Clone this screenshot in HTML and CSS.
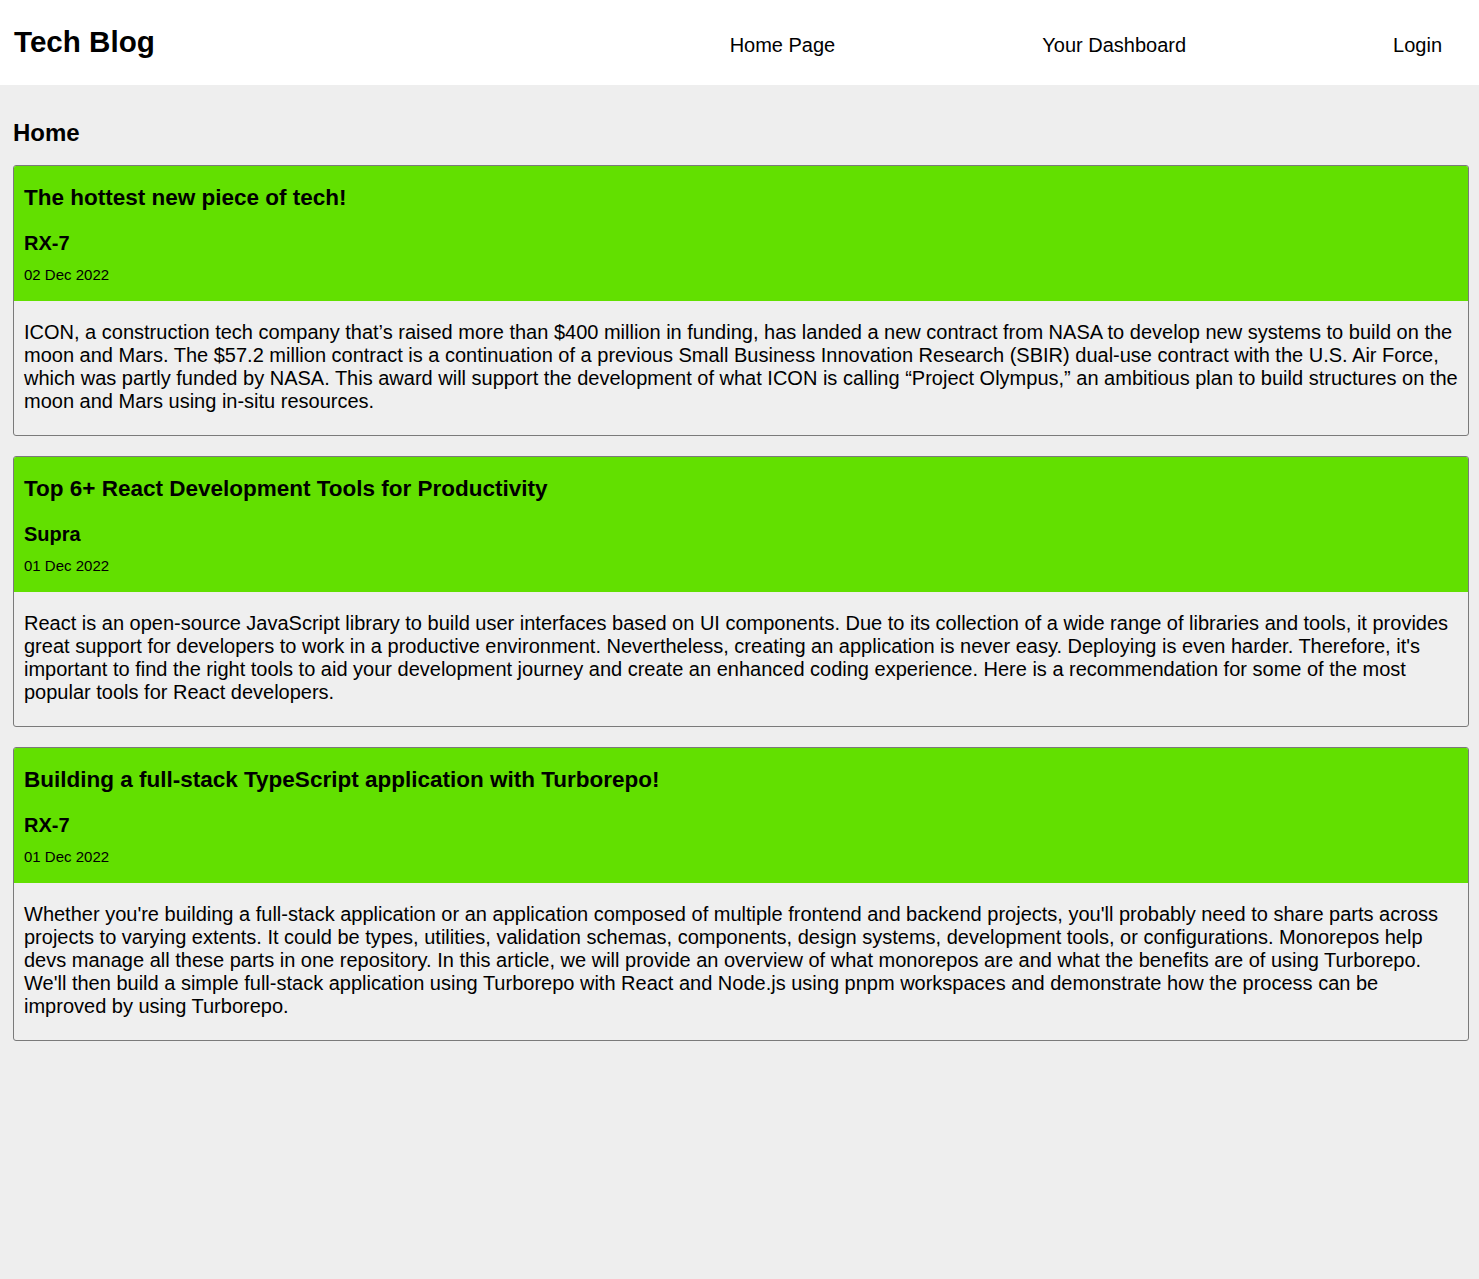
FILE: index.html
```html
<!DOCTYPE html>
<html lang="en">
<head>
<meta charset="utf-8">
<title>Tech Blog</title>
<link rel="stylesheet" href="styles.css">
</head>
<body>
<header class="site-header">
  <h1 class="brand">Tech Blog</h1>
  <nav class="nav">
    <a class="nav-link" href="#">Home Page</a>
    <a class="nav-link" href="#">Your Dashboard</a>
    <a class="nav-link" href="#">Login</a>
  </nav>
</header>
<main class="main">
  <h2 class="page-title">Home</h2>

  <article class="post">
    <div class="post-head">
      <h3 class="post-title">The hottest new piece of tech!</h3>
      <h4 class="post-author">RX-7</h4>
      <p class="post-date">02 Dec 2022</p>
    </div>
    <div class="post-body">
      <p>ICON, a construction tech company that’s raised more than $400 million in funding, has landed a new contract from NASA to develop new systems to build on the moon and Mars. The $57.2 million contract is a continuation of a previous Small Business Innovation Research (SBIR) dual-use contract with the U.S. Air Force, which was partly funded by NASA. This award will support the development of what ICON is calling “Project Olympus,” an ambitious plan to build structures on the moon and Mars using in-situ resources.</p>
    </div>
  </article>

  <article class="post">
    <div class="post-head">
      <h3 class="post-title">Top 6+ React Development Tools for Productivity</h3>
      <h4 class="post-author">Supra</h4>
      <p class="post-date">01 Dec 2022</p>
    </div>
    <div class="post-body">
      <p>React is an open-source JavaScript library to build user interfaces based on UI components. Due to its collection of a wide range of libraries and tools, it provides great support for developers to work in a productive environment. Nevertheless, creating an application is never easy. Deploying is even harder. Therefore, it's important to find the right tools to aid your development journey and create an enhanced coding experience. Here is a recommendation for some of the most popular tools for React developers.</p>
    </div>
  </article>

  <article class="post">
    <div class="post-head">
      <h3 class="post-title">Building a full-stack TypeScript application with Turborepo!</h3>
      <h4 class="post-author">RX-7</h4>
      <p class="post-date">01 Dec 2022</p>
    </div>
    <div class="post-body">
      <p>Whether you're building a full-stack application or an application composed of multiple frontend and backend projects, you'll probably need to share parts across projects to varying extents. It could be types, utilities, validation schemas, components, design systems, development tools, or configurations. Monorepos help devs manage all these parts in one repository. In this article, we will provide an overview of what monorepos are and what the benefits are of using Turborepo. We'll then build a simple full-stack application using Turborepo with React and Node.js using pnpm workspaces and demonstrate how the process can be improved by using Turborepo.</p>
    </div>
  </article>
</main>
</body>
</html>
```

FILE: styles.css
```css
* {
  box-sizing: border-box;
}

html, body {
  margin: 0;
  padding: 0;
}

body {
  background: #eeeeee;
  color: #000;
  font-family: "Liberation Sans", Arial, sans-serif;
  min-height: 1279px;
}

.site-header {
  background: #ffffff;
  height: 85px;
  display: flex;
  align-items: baseline;
  padding: 25px 37px 0 14px;
}

.brand {
  margin: 0;
  font-size: 29.6px;
  font-weight: bold;
  line-height: normal;
}

.nav {
  margin-left: auto;
  display: flex;
  gap: 207px;
}

.nav-link {
  color: #000;
  text-decoration: none;
  font-size: 20px;
}

.main {
  padding: 34px 10px 20px 13px;
}

.page-title {
  margin: 0 0 18px;
  font-size: 24px;
  font-weight: bold;
  line-height: normal;
}

.post {
  border: 1px solid #7a7a7a;
  border-radius: 3px;
  background: #efefef;
  overflow: hidden;
  margin-bottom: 20px;
}

.post-head {
  background: #62e000;
  padding: 19px 10px 18px 10px;
}

.post-title {
  margin: 0 0 21px;
  font-size: 22.5px;
  font-weight: bold;
  line-height: 26px;
}

.post-author {
  margin: 0 0 11px;
  font-size: 20px;
  font-weight: bold;
  line-height: 23px;
}

.post-date {
  margin: 0;
  font-size: 15px;
  line-height: 17px;
}

.post-body {
  padding: 20px 10px 22px;
}

.post-body p {
  margin: 0;
  font-size: 20px;
  line-height: 23px;
}
```
